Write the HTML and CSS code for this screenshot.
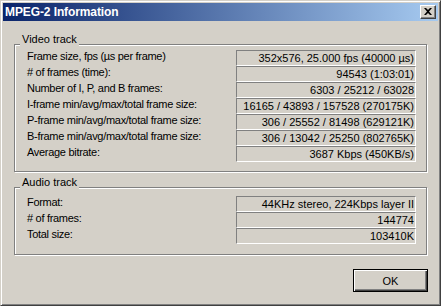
FILE: index.html
```html
<!DOCTYPE html>
<html lang="en">
<head>
  <meta charset="utf-8">
  <title>MPEG-2 Information</title>
  <link rel="stylesheet" href="styles.css">
</head>
<body>

  <div class="window">

    <div class="titlebar">
      <span class="title">MPEG-2 Information</span>
      <span class="close">
        <svg width="8" height="7" viewBox="0 0 8 7">
          <path d="M0 0h2l2 2 2-2h2v0l-3 3.5 3 3.5h-2l-2-2-2 2h-2l3-3.5z" fill="#000"/>
        </svg>
      </span>
    </div>

    <div class="client">

      <div class="group group-video">
        <div class="group-title">Video track</div>
        <div class="rows">
          <div class="label">Frame size, fps (µs per frame)</div>
          <div class="value">352x576, 25.000 fps (40000 µs)</div>
          <div class="label"># of frames (time):</div>
          <div class="value">94543 (1:03:01)</div>
          <div class="label">Number of I, P, and B frames:</div>
          <div class="value">6303 / 25212 / 63028</div>
          <div class="label">I-frame min/avg/max/total frame size:</div>
          <div class="value">16165 / 43893 / 157528 (270175K)</div>
          <div class="label">P-frame min/avg/max/total frame size:</div>
          <div class="value">306 / 25552 / 81498 (629121K)</div>
          <div class="label">B-frame min/avg/max/total frame size:</div>
          <div class="value">306 / 13042 / 25250 (802765K)</div>
          <div class="label">Average bitrate:</div>
          <div class="value">3687 Kbps (450KB/s)</div>
        </div>
      </div>

      <div class="group group-audio">
        <div class="group-title">Audio track</div>
        <div class="rows">
          <div class="label">Format:</div>
          <div class="value">44KHz stereo, 224Kbps layer II</div>
          <div class="label"># of frames:</div>
          <div class="value">144774</div>
          <div class="label">Total size:</div>
          <div class="value">103410K</div>
        </div>
      </div>

      <div class="buttons">
        <button class="btn btn-default">OK</button>
      </div>

    </div>

  </div>

</body>
</html>
```

FILE: styles.css
```css
body{
  margin:0;
  font-family:"Liberation Sans", Arial, sans-serif;
  font-size:11px;
  color:#000;
  background:#d4d0c8;
}

.window{
  width:441px;
  height:306px;
  box-sizing:border-box;
  padding:2px;
  background:#d4d0c8;
  border:1px solid;
  border-color:#d4d0c8 #404040 #404040 #d4d0c8;
  box-shadow:inset 1px 1px #fff, inset -1px -1px #808080;
}

/* ---------- title bar ---------- */

.titlebar{
  height:18px;
  display:flex;
  align-items:center;
  justify-content:space-between;
  padding:0 2px;
  background:linear-gradient(to right, #0a246a, #a6caf0);
}

.title{
  color:#fff;
  font-weight:bold;
  font-size:12px;
  letter-spacing:-0.1px;
}

.close{
  width:16px;
  height:14px;
  box-sizing:border-box;
  display:flex;
  align-items:center;
  justify-content:center;
  background:#d4d0c8;
  border:1px solid;
  border-color:#fff #404040 #404040 #fff;
  box-shadow:inset -1px -1px #808080;
}

.close svg{
  display:block;
  margin-top:-1px;
}

/* ---------- client area ---------- */

.client{
  padding:0 11px;
}

.group{
  border:1px solid #808080;
  box-shadow:inset 1px 1px #fff, 1px 1px #fff;
  padding:0 10px 9px 12px;
}

.group-video{
  margin-top:23px;
}

.group-audio{
  margin-top:15px;
  padding-bottom:10px;
}

.group-title{
  width:fit-content;
  margin:-12px 0 0 -7px;
  padding:0 2px;
  line-height:13px;
  background:#d4d0c8;
}

.rows{
  display:grid;
  grid-template-columns:1fr 180px;
  grid-auto-rows:16px;
  margin-top:4px;
}

.group-audio .rows{
  margin-top:7px;
}

.label{
  line-height:13px;
  letter-spacing:-0.3px;
  white-space:nowrap;
}

.value{
  border:1px solid;
  border-color:#808080 #fff #fff #808080;
  line-height:14px;
  text-align:right;
  padding-right:1px;
  white-space:nowrap;
}

/* ---------- buttons ---------- */

.buttons{
  display:flex;
  justify-content:flex-end;
  margin-top:14px;
}

.btn{
  width:75px;
  height:23px;
  margin-right:-1px;
  padding:0;
  font-family:inherit;
  font-size:11px;
  color:#000;
  background:#d4d0c8;
  border:1px solid #000;
  box-shadow:inset 1px 1px #fff, inset -1px -1px #404040, inset -2px -2px #808080;
}
```
